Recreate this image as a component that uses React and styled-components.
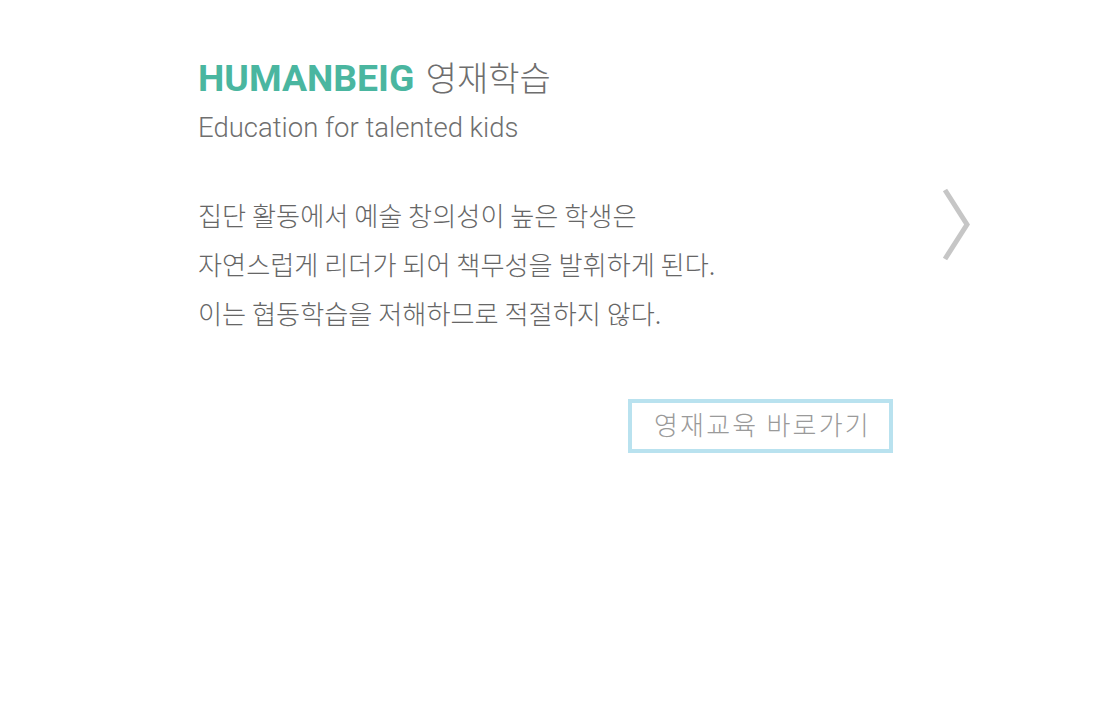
import React from "react";
import styled, { createGlobalStyle } from "styled-components";

const GlobalStyle = createGlobalStyle`
  html, body { margin: 0; padding: 0; background: #ffffff; }
  body { font-family: "Roboto", "Noto Sans CJK KR", sans-serif; }
`;

const Page = styled.main`
  position: relative;
  width: 1098px;
  height: 723px;
  overflow: hidden;
  background: #fff;
`;

const Content = styled.section`
  display: flex;
  flex-direction: column;
  width: 695px;
  margin-left: 198px;
  padding-top: 55px;
`;

const Title = styled.h1`
  margin: 0;
  font-family: "Roboto", "Noto Sans CJK KR", sans-serif;
  font-size: 37.3px;
  line-height: 44px;
  font-weight: 700;
  color: #4ab6a0;
  white-space: nowrap;
`;

const TitleKo = styled.span`
  font-family: "Noto Sans CJK KR", sans-serif;
  font-size: 34px;
  font-weight: 300;
  color: #6e6e6e;
  margin-left: 2px;
`;

const Subtitle = styled.p`
  margin: 11px 0 0;
  font-family: "Roboto", sans-serif;
  font-size: 27.5px;
  line-height: 34px;
  font-weight: 300;
  color: #6f6f6f;
`;

const Body = styled.div`
  margin-top: 46px;
  display: flex;
  flex-direction: column;
`;

const Line = styled.p`
  margin: 0;
  font-family: "Noto Sans CJK KR", sans-serif;
  font-size: 26.2px;
  line-height: 49px;
  font-weight: 300;
  color: #666;
  white-space: nowrap;
`;

const LinkButton = styled.a`
  align-self: flex-end;
  margin-top: 61px;
  box-sizing: border-box;
  width: 265px;
  height: 54px;
  border: 4px solid #b9e2ef;
  display: flex;
  align-items: center;
  padding-left: 22px;
  padding-bottom: 5px;
  font-family: "Noto Sans CJK KR", sans-serif;
  font-size: 26px;
  font-weight: 300;
  letter-spacing: 2.2px;
  line-height: 40px;
  color: #9a9a9a;
  text-decoration: none;
  white-space: nowrap;
`;

const NextArrow = styled.button`
  position: absolute;
  left: 938px;
  top: 186px;
  width: 36px;
  height: 78px;
  padding: 0;
  border: 0;
  background: transparent;
  cursor: pointer;
  svg { display: block; }
`;

export default function App() {
  return (
    <Page>
      <GlobalStyle />
      <Content>
        <Title>
          HUMANBEIG <TitleKo>영재학습</TitleKo>
        </Title>
        <Subtitle>Education for talented kids</Subtitle>
        <Body>
          <Line>집단 활동에서 예술 창의성이 높은 학생은</Line>
          <Line>자연스럽게 리더가 되어 책무성을 발휘하게 된다.</Line>
          <Line>이는 협동학습을 저해하므로 적절하지 않다.</Line>
        </Body>
        <LinkButton href="#">영재교육 바로가기</LinkButton>
      </Content>
      <NextArrow aria-label="next">
        <svg width="36" height="78" viewBox="0 0 36 78">
          <path
            d="M7 4 L29 38.5 L7 73"
            fill="none"
            stroke="#c6c6c6"
            strokeWidth="5"
            strokeLinecap="butt"
            strokeLinejoin="miter"
          />
        </svg>
      </NextArrow>
    </Page>
  );
}
